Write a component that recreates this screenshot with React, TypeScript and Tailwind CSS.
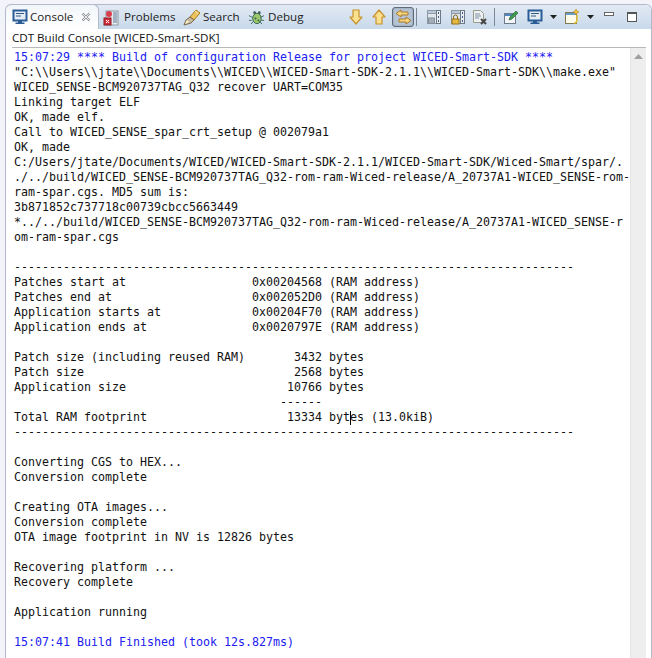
import React from "react";

const lines: [string, boolean?][] = [
  ["15:07:29 **** Build of configuration Release for project WICED-Smart-SDK ****", true],
  ['"C:\\\\Users\\\\jtate\\\\Documents\\\\WICED\\\\WICED-Smart-SDK-2.1.1\\\\WICED-Smart-SDK\\\\make.exe"'],
  ["WICED_SENSE-BCM920737TAG_Q32 recover UART=COM35"],
  ["Linking target ELF"],
  ["OK, made elf."],
  ["Call to WICED_SENSE_spar_crt_setup @ 002079a1"],
  ["OK, made"],
  ["C:/Users/jtate/Documents/WICED/WICED-Smart-SDK-2.1.1/WICED-Smart-SDK/Wiced-Smart/spar/."],
  ["./../build/WICED_SENSE-BCM920737TAG_Q32-rom-ram-Wiced-release/A_20737A1-WICED_SENSE-rom-"],
  ["ram-spar.cgs. MD5 sum is:"],
  ["3b871852c737718c00739cbcc5663449"],
  ["*../../build/WICED_SENSE-BCM920737TAG_Q32-rom-ram-Wiced-release/A_20737A1-WICED_SENSE-r"],
  ["om-ram-spar.cgs"],
  [""],
  ["--------------------------------------------------------------------------------"],
  ["Patches start at                  0x00204568 (RAM address)"],
  ["Patches end at                    0x002052D0 (RAM address)"],
  ["Application starts at             0x00204F70 (RAM address)"],
  ["Application ends at               0x0020797E (RAM address)"],
  [""],
  ["Patch size (including reused RAM)       3432 bytes"],
  ["Patch size                              2568 bytes"],
  ["Application size                       10766 bytes"],
  ["                                      ------"],
  ["Total RAM footprint                    13334 bytes (13.0kiB)"],
  ["--------------------------------------------------------------------------------"],
  [""],
  ["Converting CGS to HEX..."],
  ["Conversion complete"],
  [""],
  ["Creating OTA images..."],
  ["Conversion complete"],
  ["OTA image footprint in NV is 12826 bytes"],
  [""],
  ["Recovering platform ..."],
  ["Recovery complete"],
  [""],
  ["Application running"],
  [""],
  ["15:07:41 Build Finished (took 12s.827ms)", true],
];

function Monitor({ className = "" }: { className?: string }) {
  return (
    <svg width="16" height="16" viewBox="0 0 16 16" className={"shrink-0 " + className}>
      <rect x="1.5" y="1.5" width="13" height="10" fill="#e4edf6" stroke="#2a5c96" strokeWidth="2" />
      <path d="M4 4.5h8M4 7h5" stroke="#35587f" strokeWidth="1" />
      <path d="M6 12h4v1.5h2.5V15h-9v-1.5H6z" fill="#2a5c96" />
    </svg>
  );
}

function Arrow({ up, className = "" }: { up?: boolean; className?: string }) {
  return (
    <svg width="14" height="16" viewBox="0 0 14 16" className={"shrink-0 " + className}>
      <path
        d={up ? "M7 1L13 8H10V15H4V8H1Z" : "M4 1H10V8H13L7 15L1 8H4Z"}
        fill="#fbe08f"
        stroke="#c8922c"
        strokeWidth="1.2"
        strokeLinejoin="round"
      />
    </svg>
  );
}

function Sync() {
  return (
    <div className="ml-[6px] w-[22px] h-[20px] flex items-center justify-center rounded-[3px] border border-[#5f6b78] bg-[#b5c5d6] shadow-[inset_0_0_2px_#7f8a96]">
      <svg width="17" height="16" viewBox="0 0 17 16">
        <path d="M6 1L1 4.5 6 8V6h7V3H6z" fill="#f7d67c" stroke="#a9782a" strokeLinejoin="round" />
        <path d="M11 8l5 3.5-5 3.5v-2H4v-3h7z" fill="#f7d67c" stroke="#a9782a" strokeLinejoin="round" />
      </svg>
    </div>
  );
}

function PageGrid({ lock, className = "" }: { lock?: boolean; className?: string }) {
  return (
    <svg width="16" height="16" viewBox="0 0 16 16" className={"shrink-0 " + className}>
      <rect x="1.5" y="1.5" width="9" height="13" fill="#dfe6ec" stroke="#8e99a6" />
      <rect x="1.5" y="1.5" width="9" height="3" fill="#b9c7d6" stroke="#8e99a6" />
      <rect x="10.5" y="1.5" width="4" height="13" fill="#e9edf1" stroke="#6d7885" />
      <path d="M12 4h1M12 8h1M12 12h1" stroke="#3b5f8a" strokeWidth="2" />
      {lock ? (
        <g>
          <path d="M3.5 10V8a2 2 0 014 0v2" fill="none" stroke="#8a6a1c" />
          <rect x="2" y="10" width="7" height="5" fill="#e7b93f" stroke="#94701c" />
        </g>
      ) : (
        <rect x="2.5" y="9" width="6" height="5.5" fill="#a3adb9" stroke="#86909c" />
      )}
    </svg>
  );
}

function Caret({ className = "" }: { className?: string }) {
  return (
    <svg width="7" height="4" viewBox="0 0 7 4" className={"shrink-0 " + className}>
      <path d="M0 0h7L3.5 4z" fill="#222" />
    </svg>
  );
}

export default function App() {
  return (
    <div className="w-[652px] h-[658px] bg-[#f3f4fa] overflow-hidden pt-[4px] pl-[5px] flex flex-col font-['Open_Sans',sans-serif] text-[11.6px]">
      <div className="flex-1 min-h-0 flex flex-col rounded-t-[6px] border-t border-l border-r border-[#b4b9cc] bg-white">
        {/* tab bar */}
        <div className="h-[24px] shrink-0 flex items-stretch rounded-t-[5px] bg-gradient-to-b from-[#e2eaf4] to-[#c8d9ea]">
          <div className="w-[93px] -mt-px shrink-0 flex items-center pl-[6px] bg-gradient-to-b from-[#f2f5f9] to-white rounded-t-[6px] border-t border-r border-[#b4b9cc] text-[#1a1a1a]">
            <Monitor />
            <span className="ml-[2px] w-[45px] shrink-0">Console</span>
            <svg width="10" height="10" viewBox="0 0 10 10" className="ml-[6px] shrink-0">
              <path d="M1.5 1.5l7 7M8.5 1.5l-7 7" stroke="#8f959c" strokeWidth="2.4" />
              <path d="M1.5 1.5l7 7M8.5 1.5l-7 7" stroke="#f4f4f4" strokeWidth="0.9" />
            </svg>
          </div>
          <div className="flex items-center text-[#222]">
            <svg width="16" height="17" viewBox="0 0 16 17" className="shrink-0 ml-[4px]">
              <rect x="3" y="2" width="12" height="14" fill="#e7ebef" stroke="#8f99a5" />
              <circle cx="6" cy="5" r="3" fill="#d8404c" />
              <rect x="1" y="9" width="7" height="7" fill="#d2303c" stroke="#8d1a22" />
              <path d="M3 11l3 3M6 11l-3 3" stroke="#fff" />
              <path d="M11 3v11M13 3v11" stroke="#5f7a96" />
            </svg>
            <span className="ml-[5px] w-[50px] shrink-0">Problems</span>
            <svg width="18" height="18" viewBox="0 0 18 18" className="shrink-0 ml-[9px]">
              <path d="M7 9l6-7 4 3-6 7z" fill="#ecc25c" stroke="#a67d22" />
              <path d="M12 3l3 2.5" stroke="#fff2b0" />
              <path d="M7 9l4 3-3 3-7 2 2-5z" fill="#c8bca0" stroke="#77694e" />
              <path d="M2 16l2-4 2 2z" fill="#fff6d0" />
            </svg>
            <span className="ml-[2px] w-[36px] shrink-0">Search</span>
            <svg width="17" height="17" viewBox="0 0 18 18" className="shrink-0 ml-[9px]">
              <ellipse cx="9.5" cy="10" rx="4.5" ry="5.5" fill="#9cc76a" stroke="#2f5f4a" />
              <circle cx="7" cy="4" r="1.5" fill="#3d5f55" />
              <circle cx="12" cy="4" r="1.5" fill="#3d5f55" />
              <path d="M1 7l4 2M1 12h3M3 16l3-3M17 7l-4 2M17 12h-3M15 16l-3-3" stroke="#3b6b5a" />
              <circle cx="8" cy="10" r="1" fill="#2f5f4a" />
              <circle cx="11" cy="12" r="1" fill="#2f5f4a" />
            </svg>
            <span className="ml-[3px]">Debug</span>
          </div>
          {/* toolbar */}
          <div className="ml-auto flex items-center pr-[14px]">
            <Arrow />
            <Arrow up className="ml-[9px]" />
            <Sync />
            <div className="ml-[2px] w-px h-[18px] bg-[#7d8895]" />
            <PageGrid className="ml-[9px]" />
            <PageGrid lock className="ml-[8px]" />
            <svg width="16" height="16" viewBox="0 0 16 16" className="ml-[6px] shrink-0">
              <path d="M1.5 1.5h7l3 3v9h-10z" fill="#eef1f4" stroke="#9a9a86" />
              <path d="M3 5h5M3 7h6M3 9h4" stroke="#7f8fa3" />
              <path d="M9 10l5 5M14 10l-5 5" stroke="#444" strokeWidth="2" />
            </svg>
            <div className="ml-[6px] w-px h-[18px] bg-[#7d8895]" />
            <svg width="16" height="16" viewBox="0 0 16 16" className="ml-[8px] shrink-0">
              <rect x="1.5" y="4.5" width="11" height="10" fill="#f4f6f9" stroke="#6d7c8c" />
              <rect x="2" y="5" width="10" height="2" fill="#4f86bd" />
              <path d="M7 8l6-6 2 2-6 6-3 1z" fill="#3f9b50" stroke="#2a6b37" strokeWidth=".7" />
            </svg>
            <Monitor className="ml-[8px]" />
            <Caret className="ml-[7px]" />
            <svg width="16" height="16" viewBox="0 0 16 16" className="ml-[7px] shrink-0">
              <rect x="1.5" y="3.5" width="11" height="11" fill="#fdfbe9" stroke="#7f7a55" />
              <rect x="2" y="4" width="10" height="2" fill="#6a9ccc" />
              <path d="M13 6v5c0 2-1 3-3 3" fill="none" stroke="#e8c23a" strokeWidth="1.5" />
              <path d="M12 0l1 2 2 1-2 1-1 2-1-2-2-1 2-1z" fill="#f2c230" stroke="#a67d22" strokeWidth=".5" />
            </svg>
            <Caret className="ml-[7px]" />
            <div className="ml-[10px] w-[10px] h-[4px] border border-[#666] bg-white -mt-[6px] shrink-0" />
            <div className="ml-[13px] w-[10px] h-[10px] border border-[#555] border-t-2 bg-white shrink-0" />
          </div>
        </div>
        {/* subtitle */}
        <div className="h-[18px] shrink-0 flex items-center pl-[6px] text-[#111] bg-white">
          CDT Build Console [WICED-Smart-SDK]
        </div>
        {/* console */}
        <div className="flex-1 min-h-0 flex ml-[6px] mr-[5px] border-t border-[#b8b8b8]">
          <div className="flex-1 min-w-0 pl-[2px] pt-[2px] relative font-['DejaVu_Sans_Mono',monospace] text-[11.63px] leading-[15px] whitespace-pre text-[#111] overflow-hidden">
            {lines.map(([t, blue], i) => (
              <div key={i} className={"h-[15px] " + (blue ? "text-[#2020f0]" : "")}>{t}</div>
            ))}
            <div className="absolute left-[338px] top-[363px] w-px h-[14px] bg-black" />
          </div>
          <div className="w-[16px] shrink-0 bg-[#eeeeee] border-l border-[#e4e4e4] flex justify-center pt-[6px]">
            <svg width="9" height="5" viewBox="0 0 9 5" className="shrink-0"><path d="M0 5L4.5 0 9 5z" fill="#a0a0a0" /></svg>
          </div>
        </div>
      </div>
    </div>
  );
}
